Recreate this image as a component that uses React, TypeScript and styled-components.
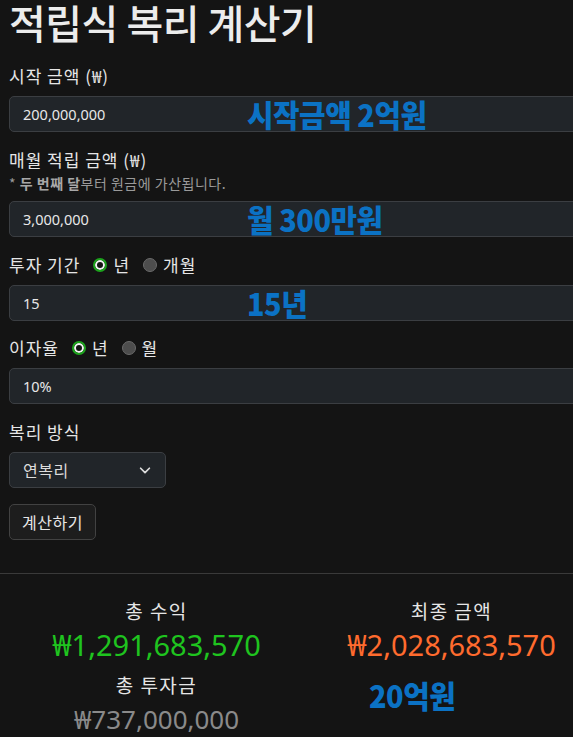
import styled, { createGlobalStyle } from 'styled-components';

const GlobalStyle = createGlobalStyle`
  body {
    margin: 0;
    background: #141414;
    color: #e6e6e6;
    font-family: "Noto Sans CJK KR", "Noto Sans", sans-serif;
    overflow: hidden;
  }
`;

const Page = styled.div`
  width: 590px;
  padding: 0 0 0 9px;
`;

const Title = styled.h1`
  margin: 0;
  font-size: 40px;
  line-height: 44px;
  padding-bottom: 2px;
  font-weight: 500;
  color: #ececec;
  letter-spacing: -0.5px;
`;

const Field = styled.div<{ $gap?: number }>`
  margin-top: ${(p) => p.$gap ?? 16}px;
`;

const LabelRow = styled.div`
  display: flex;
  align-items: center;
  gap: 12px;
  font-size: 17px;
  line-height: 24px;
  letter-spacing: 1px;
  color: #e6e6e6;
`;

const Note = styled.div`
  font-size: 14px;
  line-height: 20px;
  letter-spacing: 0.5px;
  color: #9a9a9a;
  margin-top: 1px;

  b {
    font-weight: 700;
    color: #a8a8a8;
  }
`;

const InputWrap = styled.div`
  position: relative;
  margin-top: 8px;
`;

const Input = styled.div<{ $width?: number }>`
  box-sizing: border-box;
  height: 36px;
  width: ${(p) => (p.$width ? `${p.$width}px` : '100%')};
  display: flex;
  align-items: center;
  justify-content: space-between;
  padding: 0 13px;
  background: #212529;
  border: 1px solid #3b3e42;
  border-radius: 5px;
  font-family: "Noto Sans", "Noto Sans CJK KR", sans-serif;
  font-size: 14.5px;
  color: #e8e8e8;
`;

const SelectText = styled.span`
  font-family: "Noto Sans CJK KR", sans-serif;
  font-size: 16px;
  letter-spacing: 0.5px;
  color: #dcdcdc;
`;

const Annotation = styled.span<{ $left: number }>`
  position: absolute;
  left: ${(p) => p.$left}px;
  top: 50%;
  transform: translateY(-52%) scaleX(0.93);
  transform-origin: left center;
  font-family: "Noto Sans CJK KR", sans-serif;
  font-weight: 900;
  font-size: 31px;
  line-height: 1;
  color: #0b72c4;
  letter-spacing: -0.5px;
  white-space: nowrap;
`;

const RadioGroup = styled.label`
  display: flex;
  align-items: center;
  gap: 6px;
  margin-left: 1px;
`;

const RadioDot = styled.span<{ $on: boolean }>`
  box-sizing: border-box;
  width: 14px;
  height: 14px;
  border-radius: 50%;
  background: ${(p) => (p.$on ? '#131313' : '#4d4d4d')};
  border: ${(p) => (p.$on ? '2px solid #1ca31c' : '1px solid #6a6a6a')};
  box-shadow: ${(p) => (p.$on ? 'inset 0 0 0 2px #f2f2f2' : 'none')};
`;

const Button = styled.button`
  margin-top: 16px;
  height: 36px;
  padding: 0 12px;
  background: #1d1d1d;
  border: 1px solid #424242;
  border-radius: 5px;
  color: #e6e6e6;
  font-family: "Noto Sans CJK KR", sans-serif;
  font-size: 16px;
  letter-spacing: 0.5px;
`;

const Divider = styled.hr`
  margin: 33px 0 0 -9px;
  border: 0;
  border-top: 1px solid #3a3a3a;
`;

const Results = styled.div`
  display: grid;
  grid-template-columns: 1fr 1fr;
  padding-top: 24px;
`;

const Column = styled.div`
  position: relative;
  display: flex;
  flex-direction: column;
  align-items: center;
`;

const StatLabel = styled.div`
  font-size: 19px;
  line-height: 26px;
  letter-spacing: 1.5px;
  color: #e6e6e6;
  margin-top: 9px;

  &:first-child {
    margin-top: 0;
  }
`;

const StatValue = styled.div<{ $color: string; $size?: number }>`
  margin-top: 3px;
  font-family: "Noto Sans", sans-serif;
  font-size: ${(p) => p.$size ?? 29}px;
  line-height: 36px;
  color: ${(p) => p.$color};
`;

const ResultNote = styled(Annotation)`
  top: 97px;
`;

const Radio = ({ on, text }: { on: boolean; text: string }) => (
  <RadioGroup>
    <RadioDot $on={on} />
    {text}
  </RadioGroup>
);

const Chevron = () => (
  <svg width="14" height="14" viewBox="0 0 16 16" fill="none">
    <path d="M3 6l5 5 5-5" stroke="#dcdcdc" strokeWidth="2" strokeLinecap="round" strokeLinejoin="round" />
  </svg>
);

export default function App() {
  return (
    <Page>
      <GlobalStyle />
      <Title>적립식 복리 계산기</Title>

      <Field $gap={18}>
        <LabelRow>시작 금액 (₩)</LabelRow>
        <InputWrap>
          <Input>200,000,000</Input>
          <Annotation $left={238}>시작금액 2억원</Annotation>
        </InputWrap>
      </Field>

      <Field>
        <LabelRow>매월 적립 금액 (₩)</LabelRow>
        <Note>
          * <b>두 번째 달</b>부터 원금에 가산됩니다.
        </Note>
        <InputWrap>
          <Input>3,000,000</Input>
          <Annotation $left={238}>월 300만원</Annotation>
        </InputWrap>
      </Field>

      <Field>
        <LabelRow>
          투자 기간
          <Radio on text="년" />
          <Radio on={false} text="개월" />
        </LabelRow>
        <InputWrap>
          <Input>15</Input>
          <Annotation $left={238}>15년</Annotation>
        </InputWrap>
      </Field>

      <Field $gap={15}>
        <LabelRow>
          이자율
          <Radio on text="년" />
          <Radio on={false} text="월" />
        </LabelRow>
        <InputWrap>
          <Input>10%</Input>
        </InputWrap>
      </Field>

      <Field>
        <LabelRow>복리 방식</LabelRow>
        <InputWrap>
          <Input $width={157}>
            <SelectText>연복리</SelectText>
            <Chevron />
          </Input>
        </InputWrap>
      </Field>

      <Button>계산하기</Button>

      <Divider />

      <Results>
        <Column>
          <StatLabel>총 수익</StatLabel>
          <StatValue $color="#1fc41f">₩1,291,683,570</StatValue>
          <StatLabel>총 투자금</StatLabel>
          <StatValue $color="#8a8a8a" $size={26}>₩737,000,000</StatValue>
        </Column>
        <Column>
          <StatLabel>최종 금액</StatLabel>
          <StatValue $color="#ff6b2e">₩2,028,683,570</StatValue>
          <ResultNote $left={65}>20억원</ResultNote>
        </Column>
      </Results>
    </Page>
  );
}
